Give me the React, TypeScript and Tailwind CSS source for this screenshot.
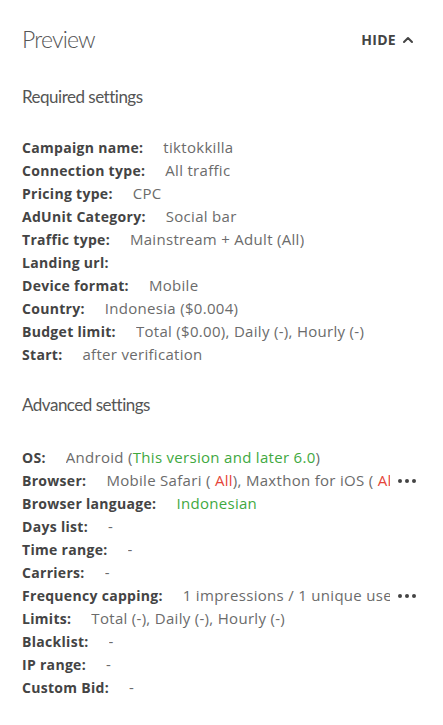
import {ChevronUp} from "lucide-react";
import type {ReactNode} from "react";

interface RowProps {
    label: string
    children?: ReactNode
    more?: boolean
}

const green = "text-[#3fa93f]";
const red = "text-[#e5453a]";

function Row({label, children, more}: RowProps) {
    return <div className="flex items-center h-[23px] whitespace-nowrap">
        <span className="font-bold text-[#444] shrink-0 tracking-[0.3px]">{label}</span>
        <span className="ml-5 text-[#6b6b6b] text-[15px] tracking-[0.3px] overflow-hidden text-clip min-w-0">{children}</span>
        {more && <span className="ml-auto pl-2 shrink-0 flex gap-[3px] items-center">
            <i className="block w-[4px] h-[4px] rounded-full bg-[#444]"/>
            <i className="block w-[4px] h-[4px] rounded-full bg-[#444]"/>
            <i className="block w-[4px] h-[4px] rounded-full bg-[#444]"/>
        </span>}
    </div>
}

function SectionTitle({text}: { text: string }) {
    return <h3 className="text-[17px] text-[#555] tracking-[-0.5px] font-['Lato',sans-serif] leading-none">{text}</h3>
}

export default function App() {
    return <div className="w-[443px] h-[725px] bg-white font-['Open_Sans',sans-serif] text-[14px] pl-[22px] pr-[27px] pt-[28px]">
        <div className="flex items-center justify-between">
            <h2 className="text-[23px] font-light text-[#555] leading-none tracking-[-0.8px] font-['Lato',sans-serif]">Preview</h2>
            <button className="flex items-center gap-1 font-bold text-[#444] text-[14px] tracking-[0.3px]">
                HIDE <ChevronUp size={16} strokeWidth={3}/>
            </button>
        </div>

        <div className="mt-[37px]">
            <SectionTitle text="Required settings"/>
        </div>
        <div className="mt-[31px] flex flex-col">
            <Row label="Campaign name:">tiktokkilla</Row>
            <Row label="Connection type:">All traffic</Row>
            <Row label="Pricing type:">CPC</Row>
            <Row label="AdUnit Category:">Social bar</Row>
            <Row label="Traffic type:">Mainstream + Adult (All)</Row>
            <Row label="Landing url:"/>
            <Row label="Device format:">Mobile</Row>
            <Row label="Country:">Indonesia ($0.004)</Row>
            <Row label="Budget limit:">Total ($0.00), Daily (-), Hourly (-)</Row>
            <Row label="Start:">after verification</Row>
        </div>

        <div className="mt-[30px]">
            <SectionTitle text="Advanced settings"/>
        </div>
        <div className="mt-[33px] flex flex-col">
            <Row label="OS:">Android (<span className={green}>This version and later 6.0</span>)</Row>
            <Row label="Browser:" more>Mobile Safari ( <span className={red}>All</span>), Maxthon for iOS ( <span className={red}>All</span>)</Row>
            <Row label="Browser language:"><span className={green}>Indonesian</span></Row>
            <Row label="Days list:">-</Row>
            <Row label="Time range:">-</Row>
            <Row label="Carriers:">-</Row>
            <Row label="Frequency capping:" more>1 impressions / 1 unique user</Row>
            <Row label="Limits:">Total (-), Daily (-), Hourly (-)</Row>
            <Row label="Blacklist:">-</Row>
            <Row label="IP range:">-</Row>
            <Row label="Custom Bid:">-</Row>
        </div>
    </div>
}
